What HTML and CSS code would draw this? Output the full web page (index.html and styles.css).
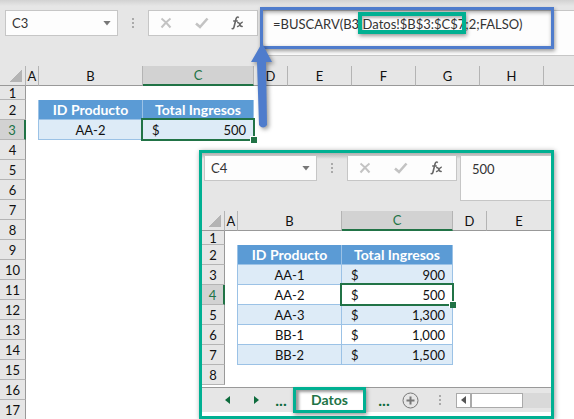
FILE: index.html
```html
<!DOCTYPE html>
<html lang="es">

<head>
    <meta charset="UTF-8">
    <meta name="viewport" content="width=device-width, initial-scale=1.0">
    <title>BUSCARV</title>
    <link rel="stylesheet" href="styles.css">
</head>

<body>
    <svg class="defs" aria-hidden="true">
        <symbol id="icon-x" viewBox="0 0 12 12">
            <path d="M1.5 1.5 Q6 5 10.5 10.5 M10.5 1.5 Q6 5 1.5 10.5" fill="none" stroke="#c3c3c3" stroke-width="2" />
        </symbol>
        <symbol id="icon-check" viewBox="0 0 14 12">
            <path d="M1 6.5 L5 10 L12.5 1.5" fill="none" stroke="#c3c3c3" stroke-width="2.6" />
        </symbol>
        <symbol id="icon-fx" viewBox="0 0 14 14">
            <path d="M7.8 1.6 Q6 0 5 3 L3 11 Q2.4 13.4 .6 12.4 M2.2 5 H6.8" fill="none" stroke="#666" stroke-width="1.6" />
            <path d="M6.2 6.8 Q8 6 8.8 8.5 T11.8 10.4 M11.8 6.4 Q10.4 6 9 8.5 T6 10.4" fill="none" stroke="#666" stroke-width="1.5" />
        </symbol>
    </svg>

    <div class="workbook">
        <!-- main sheet -->
        <div class="toolbar">
            <div class="name-box">
                <input type="text" value="C3" aria-label="Cuadro de nombres">
                <button type="button" class="caret" aria-label="Lista de nombres"></button>
            </div>
            <div class="dots"><i></i><i></i><i></i></div>
            <div class="actions">
                <button type="button" aria-label="Cancelar"><svg width="12" height="12"><use href="#icon-x" /></svg></button>
                <button type="button" aria-label="Introducir"><svg width="14" height="12"><use href="#icon-check" /></svg></button>
                <button type="button" aria-label="Insertar función"><svg width="14" height="14"><use href="#icon-fx" /></svg></button>
            </div>
            <div class="formula">
                <input type="text" value="=BUSCARV(B3;Datos!$B$3:$C$7;2;FALSO)" aria-label="Barra de fórmulas">
            </div>
        </div>

        <table class="grid">
            <colgroup>
                <col class="col-num"><col class="col-a"><col class="col-b"><col class="col-c"><col class="col-d">
                <col class="col-e"><col class="col-e"><col class="col-e"><col class="col-e"><col>
            </colgroup>
            <thead>
                <tr>
                    <th class="corner"></th><th>A</th><th>B</th><th class="active">C</th><th>D</th>
                    <th>E</th><th>F</th><th>G</th><th>H</th><th></th>
                </tr>
            </thead>
            <tbody>
                <tr class="short"><th>1</th></tr>
                <tr>
                    <th>2</th><td class="edge"></td>
                    <td class="title">ID Producto</td><td class="title">Total Ingresos</td>
                </tr>
                <tr>
                    <th class="active">3</th><td class="edge"></td>
                    <td class="cell band">AA-2</td>
                    <td class="cell band selected"><div class="money"><span>$</span><span>500</span></div></td>
                </tr>
                <tr><th>4</th></tr>
                <tr><th>5</th></tr>
                <tr><th>6</th></tr>
                <tr><th>7</th></tr>
                <tr><th>8</th></tr>
                <tr><th>9</th></tr>
                <tr><th>10</th></tr>
                <tr><th>11</th></tr>
                <tr><th>12</th></tr>
                <tr><th>13</th></tr>
                <tr><th>14</th></tr>
                <tr><th>15</th></tr>
                <tr><th>16</th></tr>
                <tr><th>17</th></tr>
            </tbody>
        </table>

        <!-- sheet "Datos" -->
        <div class="inset">
            <div class="toolbar">
                <div class="name-box">
                    <input type="text" value="C4" aria-label="Cuadro de nombres">
                    <button type="button" class="caret" aria-label="Lista de nombres"></button>
                </div>
                <div class="dots"><i></i><i></i><i></i></div>
                <div class="actions">
                    <button type="button" aria-label="Cancelar"><svg width="12" height="12"><use href="#icon-x" /></svg></button>
                    <button type="button" aria-label="Introducir"><svg width="14" height="12"><use href="#icon-check" /></svg></button>
                    <button type="button" aria-label="Insertar función"><svg width="14" height="14"><use href="#icon-fx" /></svg></button>
                </div>
                <div class="formula">
                    <input type="text" value="500" aria-label="Barra de fórmulas">
                </div>
            </div>

            <table class="grid">
                <colgroup>
                    <col class="col-num"><col class="col-a"><col class="col-b"><col class="col-c"><col class="col-d"><col>
                </colgroup>
                <thead>
                    <tr>
                        <th class="corner"></th><th>A</th><th>B</th><th class="active">C</th><th>D</th><th>E</th>
                    </tr>
                </thead>
                <tbody>
                    <tr class="short"><th>1</th></tr>
                    <tr>
                        <th>2</th><td class="edge"></td>
                        <td class="title">ID Producto</td><td class="title">Total Ingresos</td>
                    </tr>
                    <tr>
                        <th>3</th><td class="edge"></td>
                        <td class="cell band">AA-1</td>
                        <td class="cell band"><div class="money"><span>$</span><span>900</span></div></td>
                    </tr>
                    <tr>
                        <th class="active">4</th><td class="edge"></td>
                        <td class="cell">AA-2</td>
                        <td class="cell selected"><div class="money"><span>$</span><span>500</span></div></td>
                    </tr>
                    <tr>
                        <th>5</th><td class="edge"></td>
                        <td class="cell band">AA-3</td>
                        <td class="cell band"><div class="money"><span>$</span><span>1,300</span></div></td>
                    </tr>
                    <tr>
                        <th>6</th><td class="edge"></td>
                        <td class="cell">BB-1</td>
                        <td class="cell"><div class="money"><span>$</span><span>1,000</span></div></td>
                    </tr>
                    <tr>
                        <th>7</th><td class="edge"></td>
                        <td class="cell band">BB-2</td>
                        <td class="cell band"><div class="money"><span>$</span><span>1,500</span></div></td>
                    </tr>
                    <tr><th>8</th></tr>
                </tbody>
            </table>

            <div class="tabs">
                <button type="button" class="nav" aria-label="Anterior"><svg width="6" height="8"><path d="M5 0 V8 L0 4 Z" fill="#0d6b3c" /></svg></button>
                <button type="button" class="nav" aria-label="Siguiente"><svg width="6" height="8"><path d="M0 0 V8 L5 4 Z" fill="#0d6b3c" /></svg></button>
                <button type="button" class="more">...</button>
                <button type="button" class="tab">Datos</button>
                <button type="button" class="more">...</button>
                <button type="button" class="add" aria-label="Hoja nueva">
                    <svg width="17" height="17" viewBox="0 0 17 17">
                        <circle cx="8.5" cy="8.5" r="7.5" fill="none" stroke="#777" />
                        <path d="M8.5 4.5 V12.5 M4.5 8.5 H12.5" stroke="#777" stroke-width="2" />
                    </svg>
                </button>
                <div class="dots"><i></i><i></i><i></i></div>
                <div class="scroll">
                    <button type="button" aria-label="Desplazar"><svg width="5" height="8"><path d="M5 0 V8 L0 4 Z" fill="#555" /></svg></button>
                    <span></span>
                </div>
            </div>
        </div>

        <!-- callouts -->
        <div class="frame-formula"></div>
        <div class="frame-range"></div>
        <svg class="arrow" width="30" height="96" viewBox="0 0 30 96">
            <path d="M12 2 L22 21 H16 L17 84 Q13 89 9 84 L7 21 H1 Z" fill="#4f7ccc" />
        </svg>
    </div>
</body>

</html>
```

FILE: styles.css
```css
* {
    box-sizing: border-box;
}

body {
    margin: 0;
    background: #fff;
    color: #111;
    font-family: Lato, "Liberation Sans", sans-serif;
    font-size: 13px;
    line-height: 18px;
}

button,
input {
    border: 0;
    padding: 0;
    margin: 0;
    background: none;
    color: inherit;
    font: inherit;
}

.defs {
    display: none;
}

.workbook {
    position: relative;
    height: 100vh;
    overflow: hidden;
}

/* toolbar */

.toolbar {
    display: flex;
    align-items: flex-start;
    height: 66px;
    padding: 10px 0 0 5px;
    background: linear-gradient(#d2d2d2, #e6e6e6 6px);
    color: #333;
}

.name-box,
.actions {
    display: flex;
    flex: none;
    align-items: center;
    height: 26px;
    border: 1px solid #c6c6c6;
    background: #fdfdfd;
}

.name-box {
    width: 113px;
    padding: 0 6px;
}

.name-box input {
    flex: 1;
    min-width: 0;
}

.caret {
    width: 8px;
    height: 5px;
    background: #777;
    clip-path: polygon(0 0, 100% 0, 50% 100%);
}

.dots {
    display: flex;
    flex: none;
    flex-direction: column;
    gap: 2px;
    width: 2px;
}

.dots i {
    height: 2px;
    background: #aaa;
}

.toolbar .dots {
    margin: 8px 14px 0;
}

.actions {
    width: 110px;
    justify-content: space-between;
    padding: 0 12px 0 11px;
}

.actions svg {
    display: block;
}

.formula {
    flex: 1;
    min-width: 0;
    height: 46px;
    margin-left: 3px;
    padding: 4px 0 0 11px;
    border: 1px solid #c6c6c6;
    border-right: 0;
    background: #fdfdfd;
}

.formula input {
    display: block;
    width: 100%;
}

/* grid */

.grid {
    width: 100%;
    table-layout: fixed;
    border-collapse: separate;
    border-spacing: 0;
}

.col-num { width: 26px; }
.col-a { width: 13px; }
.col-b { width: 104px; }
.col-c { width: 111px; }
.col-d { width: 34px; }
.col-e { width: 64px; }

.grid th,
.grid td {
    height: 20px;
    padding: 0;
    text-align: center;
    white-space: nowrap;
}

.grid th {
    background: #e6e6e6;
    font-weight: normal;
}

.grid thead th {
    border-bottom: 1px solid #999;
    border-right: 1px solid #b4b4b4;
}

.grid thead .active {
    border-bottom: 2px solid #217346;
}

.grid thead th:last-child {
    border-right: 0;
}

.grid tbody th {
    border-right: 1px solid #999;
    border-bottom: 1px solid #b4b4b4;
}

.grid th.active {
    background: #d2d2d2;
    color: #217346;
}

.grid tbody th.active {
    border-right: 2px solid #217346;
}

.grid .short th {
    height: 14px;
    line-height: 12px;
}

.grid .corner {
    background: linear-gradient(135deg, transparent 50%, #b4b4b4 50%) no-repeat right 3px bottom 3px / 12px 12px #e6e6e6;
}

.grid .title {
    border-right: 1px solid #9bc2e6;
    border-bottom: 1px solid #9bc2e6;
    background: #5b9bd5;
    color: #fff;
    font-size: 14px;
    font-weight: bold;
}

.grid .cell {
    border-right: 1px solid #9bc2e6;
    border-bottom: 1px solid #9bc2e6;
}

.grid .edge {
    border-right: 1px solid #9bc2e6;
}

.grid .band {
    background: #ddebf7;
}

.money {
    display: flex;
    justify-content: space-between;
    padding: 0 7px 0 9px;
}

.grid .selected {
    position: relative;
}

.selected::before {
    content: "";
    position: absolute;
    inset: -2px -2px -2px -2px;
    border: 2px solid #217346;
}

.selected::after {
    content: "";
    position: absolute;
    right: -4px;
    bottom: -4px;
    width: 6px;
    height: 6px;
    border: 1px solid #fff;
    border-width: 1px 0 0 1px;
    background: #217346;
}

/* second sheet */

.inset {
    position: absolute;
    left: 199px;
    top: 150px;
    width: 355px;
    border: 3px solid #00b092;
    background: #fff;
    box-shadow: 1px 1px 5px rgba(0, 0, 0, 0.4);
}

.inset .toolbar {
    height: 58px;
    padding: 2px 0 0 2px;
    background: linear-gradient(#b0b0b0, #e6e6e6 6px);
}

.inset .col-num {
    width: 23px;
}

.tabs {
    display: flex;
    align-items: center;
    height: 25px;
    margin: 2px 0 4px;
    border-top: 1px solid #999;
    background: #e6e6e6;
}

.tabs svg {
    display: block;
}

.nav {
    margin-left: 23px;
}

.more {
    width: 36px;
    color: #0d6b3c;
    font-size: 16px;
    font-weight: bold;
}

.nav + .more {
    width: 33px;
    padding-left: 9px;
}

.tab {
    width: 73px;
    height: 26px;
    border: 3px solid #00b092;
    background: #fff;
    color: #217346;
    font-size: 14px;
    font-weight: bold;
    box-shadow: 1px 2px 4px rgba(0, 0, 0, 0.4), inset 3px 2px 3px rgba(0, 0, 0, 0.4);
}

.tabs .dots {
    margin: 0 15px 0 20px;
}

.scroll {
    display: flex;
    flex: 1;
    height: 15px;
    background: #d9d9d9;
}

.scroll button,
.scroll span {
    border: 1px solid #aaa;
    background: #fff;
}

.scroll button {
    width: 15px;
    padding-left: 4px;
}

.scroll span {
    width: 52px;
}

/* callouts */

.frame-formula,
.frame-range {
    position: absolute;
    pointer-events: none;
}

.frame-formula {
    left: 260px;
    top: 7px;
    width: 294px;
    height: 42px;
    border: 3px solid #4f7ccc;
    box-shadow: 1px 2px 4px rgba(0, 0, 0, 0.4), inset 1px 2px 4px rgba(0, 0, 0, 0.4);
}

.frame-range {
    left: 358px;
    top: 12px;
    width: 108px;
    height: 22px;
    border: 4px solid #00b092;
    box-shadow: 1px 2px 4px rgba(0, 0, 0, 0.4), inset 1px 2px 3px rgba(0, 0, 0, 0.3);
}

.arrow {
    position: absolute;
    left: 250px;
    top: 41px;
    filter: drop-shadow(2px 2px 2px rgba(0, 0, 0, 0.4));
}
```
